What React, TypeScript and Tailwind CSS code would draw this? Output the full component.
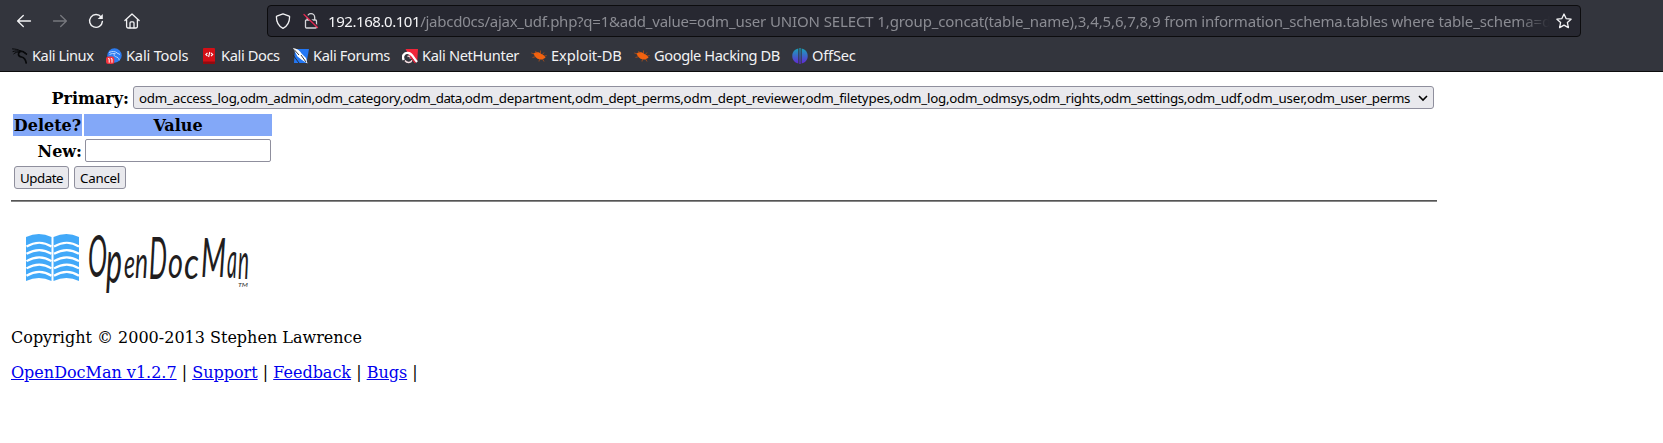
import React from 'react';

const tables = [
  { name: 'odm_access_log,', track: 'tracking-[-0.23px]' },
  { name: 'odm_admin,odm_category,', track: 'tracking-[-0.32px]' },
  { name: 'odm_data,', track: 'tracking-[-0.5px]' },
  { name: 'odm_department,', track: 'tracking-[-0.18px]' },
  { name: 'odm_dept_perms,', track: 'tracking-[-0.29px]' },
  { name: 'odm_dept_reviewer,', track: 'tracking-[-0.13px]' },
  { name: 'odm_filetypes,odm_log,', track: 'tracking-[-0.22px]' },
  { name: 'odm_odmsys,odm_rights,odm_settings,', track: 'tracking-[-0.33px]' },
  { name: 'odm_udf,', track: 'tracking-[-0.25px]' },
  { name: 'odm_user,', track: 'tracking-[-0.08px]' },
  { name: 'odm_user_perms', track: 'tracking-[-0.38px]' },
];

const BackIcon = () => (
  <svg className="h-4 w-4" viewBox="0 0 16 16" fill="none" stroke="currentColor" strokeWidth="1.3" strokeLinecap="round" strokeLinejoin="round">
    <path d="M14.5 8H1.800M7.300 2.500 1.600 8l5.700 5.500" />
  </svg>
);

const ForwardIcon = () => (
  <svg className="h-4 w-4" viewBox="0 0 16 16" fill="none" stroke="currentColor" strokeWidth="1.3" strokeLinecap="round" strokeLinejoin="round">
    <path d="M1.500 8h12.700M8.700 2.500 14.400 8l-5.700 5.500" />
  </svg>
);

const ReloadIcon = () => (
  <svg className="h-4 w-4" viewBox="0 0 16 16" fill="none" stroke="currentColor" strokeWidth="1.4" strokeLinecap="round">
    <path d="M13.200 4.200A6.400 6.400 0 1 0 14.400 8.400" />
    <path d="M14.800 1v5.100H9.700z" fill="currentColor" stroke="none" />
  </svg>
);

const HomeIcon = () => (
  <svg className="h-4 w-4" viewBox="0 0 16 16" fill="none" stroke="currentColor" strokeWidth="1.3" strokeLinecap="round" strokeLinejoin="round">
    <path d="M.9 7.600 8 1l7.100 6.600M2.600 6.400v7.200c0 .9.5 1.400 1.400 1.400h8c.9 0 1.400-.5 1.400-1.400V6.400" />
    <path d="M6 14.800V9.900c0-.6.4-1 1-1h2c.6 0 1 .4 1 1v4.900" />
  </svg>
);

const ShieldIcon = () => (
  <svg className="h-4 w-4" viewBox="0 0 16 16" fill="none" stroke="currentColor" strokeWidth="1.3" strokeLinejoin="round">
    <path d="M8 .9 14.200 3.200c.3 0 .4.3.4.6 0 5.300-1.700 9.200-6.600 11.600C3.100 13 1.400 9.100 1.400 3.800c0-.3.1-.6.4-.6z" />
  </svg>
);

const LockIcon = () => (
  <svg className="h-4 w-4" viewBox="0 0 16 16" fill="none" strokeWidth="1.3" strokeLinecap="round">
    <path d="M4.300 7V4.400a3.700 3.700 0 0 1 7.400 0V7M3.500 7h9c.6 0 1 .4 1 1v6c0 .6-.4 1-1 1h-9c-.6 0-1-.4-1-1V8c0-.6.400-1 1-1z" stroke="#d6d6da" />
    <path d="m1.500 .2 13.500 13.500" stroke="#272831" strokeWidth="1.500" />
    <path d="m1 1.500 13.500 13" stroke="#e22850" />
  </svg>
);

const StarIcon = () => (
  <svg className="h-4 w-4" viewBox="0 0 16 16" fill="none" stroke="currentColor" strokeWidth="1.3" strokeLinejoin="round">
    <path d="m8 1 2.100 4.600 5 .6-3.700 3.400 1 5L8 12.100l-4.400 2.500 1-5L.9 6.200l5-.6z" />
  </svg>
);

const DragonIcon = () => (
  <svg className="h-4 w-4" viewBox="0 0 16 16" fill="none" stroke="#08090b" strokeLinecap="round">
    <path d="M.5.9c3 .1 5.700.6 8 2M1 3.500c2.500-.8 5-.8 7.300-.2M1.800 5.800c1.500-1.300 3.500-2 6-2" strokeWidth="1" />
    <path d="M8 3.200c2.300-.3 4 .5 5.500 2.300M8.300 3.500C5.500 5 5.800 8.300 9.500 9c2.700.5 4 2 4.700 6" strokeWidth="1.700" />
    <path d="m11.500 4 3.300 1.700-.3 1" strokeWidth="1" />
  </svg>
);

const ToolsIcon = () => (
  <svg className="h-4 w-4" viewBox="0 0 16 16" fill="none">
    <circle cx="8.500" cy="7.500" r="7.200" fill="#2d7df2" />
    <path d="M3 4.500c3-1.500 6-1.300 8 .3M3.500 6.500c2-1 4-1.200 6-.7M9 5.500c-2.500 2 .5 3.200 2 3.700 1.500.6 2 1.500 2.200 3M11 5l3 1.500" stroke="#b9d6ff" strokeWidth="1" />
    <rect x="0" y="8.500" width="8.300" height="7.500" rx="2.500" fill="#f3323c" />
    <path d="M2 10.700h1.200v4M4.800 10.700H6v4" stroke="#fff" strokeWidth="1" />
  </svg>
);

const DocsIcon = () => (
  <svg className="h-4 w-4" viewBox="0 0 16 16" fill="none">
    <rect x="2" y="0" width="12" height="16" rx="1" fill="#d40f16" />
    <path d="M2 13.500h12V16H2z" fill="#920b10" />
    <path d="m6.500 4.800-1.700 1.700 1.700 1.700M10 4.800l1.700 1.700L10 8.200M8.800 4l-1.200 5" stroke="#fff" strokeWidth="1.100" />
  </svg>
);

const ForumsIcon = () => (
  <svg className="h-4 w-4" viewBox="0 0 16 16" fill="none">
    <path d="M2 1h14l-2.500 14H1z" fill="#2377f4" />
    <path d="M0 0c4 .5 7 2.500 8.500 5.500L13 10l1.500 5.500L9 12 4.500 8.500z" fill="#fff" />
    <path d="m1 1.500 5 5.500M8 7l5 7M0 7l6 8" stroke="#20242c" strokeWidth=".9" />
  </svg>
);

const NetHunterIcon = () => (
  <svg className="h-4 w-4" viewBox="0 0 16 16" fill="none">
    <path d="M3.500 1H16l-.8 12.500-8-6z" fill="#f0263a" />
    <path d="M1.800 12C-.5 8 2.500 4.300 6.500 5c4 .6 4.500 5 8.500 9" stroke="#fff" strokeWidth="2.400" />
    <path d="M3 12.500c2 3 6 2.500 7-.3M5.500 8.500c2-1 3.500.3 2.500 2" stroke="#f6dfe2" strokeWidth="1.400" />
    <path d="M8 8.500c2 1 3 4.500 5.500 6.500" stroke="#e3223a" strokeWidth="1.400" />
  </svg>
);

const BugIcon = () => (
  <svg className="h-4 w-4" viewBox="0 0 16 16" fill="none">
    <path d="M2.500 5.500c2.500-1.800 6-1.500 8 .6l3 1.600 1 2-2.500 1.200c-3 1.500-7.500 0-9.500-5.400z" fill="#f2620f" />
    <path d="M.3 5 3.500 6M1.500 9.500l3-.8M4.500 3l1.500 2.500M9.500 2.500 9.500 5.500M13 4.500 11 7M8 13.500l.5-2.500M13 13.500 11.500 11M13.500 8l2.200-.4" stroke="#c9520f" strokeWidth=".7" />
  </svg>
);

const OffSecIcon = () => (
  <svg className="h-4 w-4" viewBox="0 0 16 16" fill="none">
    <defs>
      <linearGradient id="offsec" x1="0" y1="0" x2="0" y2="1">
        <stop offset="0" stopColor="#16a6b8" />
        <stop offset="1" stopColor="#6425d8" />
      </linearGradient>
    </defs>
    <path d="M6.300.5v15C2.500 14.700.3 11.800.3 8S2.500 1.300 6.300.5zM9.700.5v15c3.800-.8 6-3.700 6-7.500s-2.200-6.700-6-7.500zM7.400 0h1.200v16H7.400z" fill="url(#offsec)" />
  </svg>
);

const bookmarks = [
  { label: 'Kali Linux', icon: <DragonIcon />, size: 'w-[94px] tracking-[-0.45px]' },
  { label: 'Kali Tools', icon: <ToolsIcon />, size: 'w-[95px] tracking-[-0.2px]' },
  { label: 'Kali Docs', icon: <DocsIcon />, size: 'w-[92px] tracking-[-0.4px]' },
  { label: 'Kali Forums', icon: <ForumsIcon />, size: 'w-[109px] tracking-[-0.37px]' },
  { label: 'Kali NetHunter', icon: <NetHunterIcon />, size: 'w-[129px] tracking-[-0.35px]' },
  { label: 'Exploit-DB', icon: <BugIcon />, size: 'w-[103px] tracking-[-0.08px]' },
  { label: 'Google Hacking DB', icon: <BugIcon />, size: 'w-[158px] tracking-[-0.42px]' },
  { label: 'OffSec', icon: <OffSecIcon />, size: 'w-[70px] tracking-[-0.2px]' },
];

const letters = [
  { c: 'O', x: 88, y: 277, w: 19, size: 58 },
  { c: 'p', x: 106, y: 283, w: 16, size: 60 },
  { c: 'e', x: 124, y: 278, w: 11, size: 40 },
  { c: 'n', x: 135, y: 278, w: 13, size: 44 },
  { c: 'D', x: 149, y: 279, w: 18, size: 59 },
  { c: 'o', x: 168, y: 278, w: 15, size: 44 },
  { c: 'c', x: 184, y: 279, w: 15, size: 44 },
  { c: 'M', x: 201, y: 277, w: 25, size: 55 },
  { c: 'a', x: 227, y: 278, w: 10, size: 50 },
  { c: 'n', x: 238, y: 279, w: 11, size: 50 },
];

const bands = [0, 1, 2, 3, 4];

const Logo = () => (
  <svg className="h-[80px] w-[250px]" viewBox="11 224 250 80">
    <path d="M26 237q13-6 25.500 0v44q-12.500-6-25.500 0zM53.500 237q13-6 25.500 0v44q-12.500-6-25.500 0z" fill="#42a9f9" />
    <g fill="none" stroke="#fff" strokeWidth="2.200">
      {bands.map((i) => (
        <path key={i} d="M26.500 246.500q13-7.500 25 0M54 246.500q13-7.500 25 0" transform={`translate(0 ${i * 7.3})`} />
      ))}
    </g>
    <text fill="#211d1e" fontFamily="Lato, sans-serif" fontStyle="italic">
      {letters.map((l, i) => (
        <tspan key={i} x={l.x} y={l.y} fontSize={l.size} textLength={l.w} lengthAdjust="spacingAndGlyphs">
          {l.c}
        </tspan>
      ))}
    </text>
    <text x="238" y="286.500" fontSize="5" textLength="10" lengthAdjust="spacingAndGlyphs" fontStyle="italic" fontFamily="Lato, sans-serif" fill="#333">TM</text>
  </svg>
);

const links = ['OpenDocMan v1.2.7', 'Support', 'Feedback', 'Bugs'];

export default function App() {
  return (
    <div className="h-[443px] w-[1663px] overflow-hidden bg-white text-black">
      <header className="h-[72px] border-b border-[#0c0c0d] bg-[#33353d] font-['Noto_Sans',sans-serif] text-[#f2f2f4]">
        <div className="flex h-10 items-center pt-px">
          <nav className="flex w-[267px] shrink-0 items-center gap-5 pl-4">
            <BackIcon />
            <span className="text-[#77787e]"><ForwardIcon /></span>
            <ReloadIcon />
            <HomeIcon />
          </nav>
          <div className="mt-px flex h-8 w-[1314px] items-center rounded-[4px] border border-[#0c0c0e] bg-[#272831] pl-[7px] pr-[7px]">
            <ShieldIcon />
            <span className="ml-3"><LockIcon /></span>
            <div className="ml-[9px] w-[1222px] overflow-hidden whitespace-pre text-[15px] leading-6 text-[#8b8c93] [mask-image:linear-gradient(to_right,#000_1190px,transparent_1222px)]">
              <span className="tracking-[-0.44px] text-[#f5f5f7]">192.168.0.101</span>
              <span className="tracking-[-0.25px]">/jabcd0cs/ajax_udf.php?q=1&amp;add_value=</span>
              <span className="tracking-[-0.12px]">odm_user UNION SELECT 1,group_concat(table_name),3,4,5,6,7,8,9 </span>
              <span className="tracking-[-0.2px]">from information_schema.tables </span>
              <span className="tracking-[-0.13px]">where table_schema=d</span>
            </div>
            <span className="ml-[6px]"><StarIcon /></span>
          </div>
        </div>
        <div className="flex h-[31px] items-center pl-3 text-[14.667px]">
          {bookmarks.map((b) => (
            <div key={b.label} className={`flex shrink-0 items-center gap-1 whitespace-nowrap ${b.size}`}>
              <span className="shrink-0">{b.icon}</span>
              <span className="-mt-0.5">{b.label}</span>
            </div>
          ))}
        </div>
      </header>

      <main className="w-[1437px] pl-[11px] font-['DejaVu_Serif',serif] text-[16px] leading-[19px]">
        <div className="flex h-[42px] items-end">
          <b className="mb-[3px] w-[118px] text-right leading-[24px]">Primary:</b>
          <div className="mb-[5px] ml-1 flex h-[23px] w-[1301px] items-center justify-between whitespace-nowrap rounded-[3px] border border-[#8f8f9d] bg-[#e9e9ed] pl-[5px] pr-[5px] pt-px font-['Noto_Sans',sans-serif] text-[13.333px]">
            <span>
              {tables.map((t) => (
                <span key={t.name} className={t.track}>{t.name}</span>
              ))}
            </span>
            <svg className="h-[10px] w-[10px]" viewBox="0 0 10 10" fill="none" stroke="#000" strokeWidth="1.600">
              <path d="m1 3 4 4 4-4" />
            </svg>
          </div>
        </div>
        <div className="flex gap-[2px] pl-[2px] text-center font-bold leading-[21px]">
          <div className="w-[69px] bg-[#83a8f8] pt-px">Delete?</div>
          <div className="w-[188px] bg-[#83a8f8] pt-px">Value</div>
        </div>
        <div className="mt-[3px] flex h-[23px] items-center pl-[2px]">
          <b className="w-[69px] pt-0.5 text-right">New:</b>
          <input className="ml-[3px] h-[23px] w-[186px] rounded-[2px] border border-[#8f8f9d] bg-white" />
        </div>
        <div className="mt-1 flex gap-[5px] pl-[3px] font-['Noto_Sans',sans-serif] text-[13.333px]">
          <button className="h-[23px] w-[55px] rounded-[3px] border border-[#8f8f9d] bg-[#e9e9ed] pt-px tracking-[-0.5px]">Update</button>
          <button className="h-[23px] w-[52px] rounded-[3px] border border-[#8f8f9d] bg-[#e9e9ed] pt-px tracking-[-0.25px]">Cancel</button>
        </div>
        <hr className="mt-[11px] h-[2px] border-0 border-t border-[#555] bg-[#888]" />
        <div className="mt-[22px] h-[80px]"><Logo /></div>
        <p className="mt-6">Copyright © 2000-2013 Stephen Lawrence</p>
        <p className="mt-4 whitespace-pre">
          {links.map((l) => (
            <React.Fragment key={l}>
              <a href="#" className="text-[#0000ee] underline">{l}</a>{' | '}
            </React.Fragment>
          ))}
        </p>
      </main>
    </div>
  );
}
